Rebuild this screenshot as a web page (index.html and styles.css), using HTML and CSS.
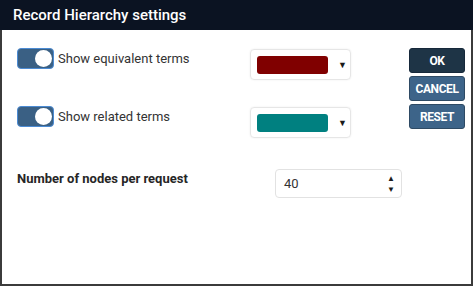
FILE: index.html
```html
<!DOCTYPE html>
<html lang="en">

<head>
    <meta charset="UTF-8">
    <title>Record Hierarchy settings</title>
    <link rel="stylesheet" href="styles.css">
</head>

<body>
    <!-- dialog -->
    <div class="dialog">
        <div class="dialog-title">Record Hierarchy settings</div>
        <div class="dialog-body">
            <div class="settings">
                <div class="row">
                    <label class="toggle-label">
                        <span class="toggle"><span class="knob"></span></span>
                        Show equivalent terms
                    </label>
                    <div class="color-select">
                        <span class="swatch swatch-red"></span>
                        <span class="caret">&#9660;</span>
                    </div>
                </div>
                <div class="row">
                    <label class="toggle-label">
                        <span class="toggle"><span class="knob"></span></span>
                        Show related terms
                    </label>
                    <div class="color-select">
                        <span class="swatch swatch-teal"></span>
                        <span class="caret">&#9660;</span>
                    </div>
                </div>
                <div class="row row-number">
                    <span class="number-label">Number of nodes per request</span>
                    <div class="number-input">
                        <span class="number-value">40</span>
                        <span class="spinner">
                            <span>&#9650;</span>
                            <span>&#9660;</span>
                        </span>
                    </div>
                </div>
            </div>
            <div class="actions">
                <button class="btn btn-ok">OK</button>
                <button class="btn">CANCEL</button>
                <button class="btn">RESET</button>
            </div>
        </div>
    </div>
</body>

</html>
```
FILE: styles.css
```css
body {
    margin: 0;
    font-family: Roboto, "Liberation Sans", sans-serif;
    background: #ffffff;
}

.dialog {
    width: 473px;
    height: 286px;
    box-sizing: border-box;
    border: 2px solid #3b3b3b;
    border-top: none;
    background: #ffffff;
}

.dialog-title {
    height: 30px;
    margin: 0 -2px;
    padding-left: 13px;
    background: #0b1322;
    color: #ffffff;
    font-size: 15px;
    font-weight: 500;
    line-height: 30px;
}

.dialog-body {
    display: flex;
    padding: 18px 6px 0 15px;
}

.settings {
    width: 392px;
}

.row {
    display: flex;
    align-items: flex-start;
    height: 31px;
    margin-bottom: 27px;
}

.toggle-label {
    display: flex;
    align-items: center;
    width: 233px;
    font-size: 13px;
    color: #333333;
}

.toggle {
    display: flex;
    align-items: center;
    justify-content: flex-end;
    width: 35px;
    height: 19px;
    margin-right: 4px;
    border: 1px solid #4c8bd3;
    border-radius: 4px;
    background: #3a6084;
}

.knob {
    width: 17px;
    height: 17px;
    margin-right: 1px;
    border-radius: 50%;
    background: #ffffff;
}

.color-select {
    display: flex;
    align-items: center;
    width: 99px;
    height: 29px;
    margin-top: 1px;
    border: 1px solid #e6e6e6;
    border-radius: 4px;
    box-shadow: 0 0 2px rgba(0, 0, 0, 0.08);
}

.swatch {
    width: 71px;
    height: 18px;
    margin-left: 6px;
    border-radius: 3px;
}

.swatch-red {
    background: #800000;
}

.swatch-teal {
    background: #008080;
}

.caret {
    margin-left: 10px;
    font-size: 9px;
    color: #1a1a1a;
}

.row-number {
    margin-top: 32px;
}

.number-label {
    width: 258px;
    margin-top: 2px;
    font-size: 13px;
    font-weight: bold;
    color: #262626;
}

.number-input {
    display: flex;
    align-items: center;
    justify-content: space-between;
    width: 127px;
    height: 29px;
    box-sizing: border-box;
    padding: 0 6px 0 8px;
    border: 1px solid #e2e2e2;
    border-radius: 4px;
}

.number-value {
    font-size: 13px;
    color: #333333;
}

.spinner {
    display: flex;
    flex-direction: column;
    font-size: 8px;
    line-height: 11px;
    color: #1a1a1a;
}

.actions {
    display: flex;
    flex-direction: column;
    gap: 3px;
}

.btn {
    width: 56px;
    height: 25px;
    padding: 0;
    border: 1px solid #2e4a64;
    border-radius: 3px;
    background: #3d6489;
    color: #ffffff;
    font-family: Roboto, "Liberation Sans", sans-serif;
    font-size: 12px;
    font-weight: bold;
    letter-spacing: -0.4px;
}

.btn-ok {
    background: #1e3446;
    border-color: #16283a;
}
```
